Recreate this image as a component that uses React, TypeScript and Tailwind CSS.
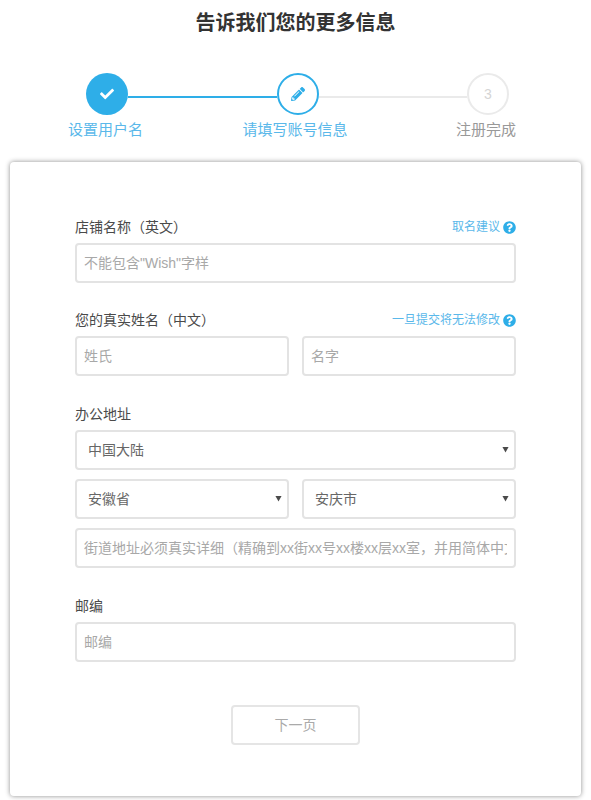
import React from 'react';
import { FaCheck, FaPencilAlt, FaQuestionCircle } from 'react-icons/fa';

const inputClass =
  'w-full h-10 rounded border-2 border-[#e3e3e3] bg-white px-[7px] text-sm text-[#666] outline-none placeholder:text-[#a8a8a8]';

const Hint = ({ text }: { text: string }) => (
  <span className="flex items-center gap-[3px] text-xs text-[#5ab8ea]">
    {text}
    <FaQuestionCircle className="w-[13px] h-[13px] text-[#2eaee8]" />
  </span>
);

const FieldLabel = ({ label, hint }: { label: string; hint?: string }) => (
  <div className="flex items-center justify-between h-5 mb-1.5 text-sm text-[#4a4a4a]">
    <span>{label}</span>
    {hint && <Hint text={hint} />}
  </div>
);

const Select = ({ value }: { value: string }) => (
  <div className="relative w-full">
    <select
      defaultValue={value}
      className="w-full h-10 appearance-none rounded border-2 border-[#e3e3e3] bg-white pl-[11px] pr-6 text-sm text-[#666] outline-none"
    >
      <option>{value}</option>
    </select>
    <svg viewBox="0 0 8 8" className="absolute right-[7px] top-[16px] w-[7px] h-[7px] pointer-events-none">
      <path d="M0.5 1h7L4 7.5z" fill="#4a4a4a" />
    </svg>
  </div>
);

const Line = ({ active }: { active?: boolean }) => (
  <div className={active ? 'flex-1 h-0.5 mt-[5px] bg-[#2eaee8]' : 'flex-1 h-0.5 mt-[5px] bg-[#eaeaea]'}></div>
);

export default function App() {
  return (
    <div
      className="h-[800px] overflow-hidden bg-white pt-3"
      style={{ fontFamily: '"Liberation Sans", "Noto Sans CJK SC", sans-serif' }}
    >
      <h1 className="h-[23px] text-center text-[20px] leading-[23px] font-bold text-[#333]">告诉我们您的更多信息</h1>

      <div className="mt-[38px] pl-[86px] pr-[82px] flex items-center">
        <div className="w-[42px] h-[42px] rounded-full bg-[#2eaee8] flex items-center justify-center text-white">
          <FaCheck className="w-[14px] h-[14px]" />
        </div>
        <Line active />
        <div className="w-[42px] h-[42px] rounded-full border-2 border-[#2eaee8] flex items-center justify-center text-[#2eaee8]">
          <FaPencilAlt className="w-[14px] h-[14px]" />
        </div>
        <Line />
        <div className="w-[42px] h-[42px] rounded-full border-2 border-[#eaeaea] flex items-center justify-center text-sm text-[#d5d5d5]">
          3
        </div>
      </div>

      <div className="mt-[4px] pl-[68px] pr-[75px] flex justify-between text-[15px] leading-[22px] text-[#5ab8ea]">
        <span>设置用户名</span>
        <span className="ml-[-9px]">请填写账号信息</span>
        <span className="text-[#999]">注册完成</span>
      </div>

      <div className="mx-2.5 mt-[21px] w-[571px] h-[634px] rounded bg-white shadow-[0_0_5px_rgba(0,0,0,0.45)] px-[65px] pt-[55px]">
        <FieldLabel label="店铺名称（英文）" hint="取名建议" />
        <input className={inputClass} placeholder={'不能包含"Wish"字样'} />

        <div className="mt-[27px]">
          <FieldLabel label="您的真实姓名（中文）" hint="一旦提交将无法修改" />
          <div className="grid grid-cols-2 gap-[13px]">
            <input className={inputClass} placeholder="姓氏" />
            <input className={inputClass} placeholder="名字" />
          </div>
        </div>

        <div className="mt-[28px]">
          <FieldLabel label="办公地址" />
          <Select value="中国大陆" />
          <div className="grid grid-cols-2 gap-[13px] mt-[9px]">
            <Select value="安徽省" />
            <Select value="安庆市" />
          </div>
          <input
            className={inputClass + ' mt-[9px]'}
            placeholder="街道地址必须真实详细（精确到xx街xx号xx楼xx层xx室，并用简体中文填写）"
          />
        </div>

        <div className="mt-[28px]">
          <FieldLabel label="邮编" />
          <input className={inputClass} placeholder="邮编" />
        </div>

        <div className="mt-[43px] flex justify-center">
          <button className="w-[129px] h-10 rounded border-2 border-[#e5e5e5] bg-white text-sm text-[#aaa]">下一页</button>
        </div>
      </div>
    </div>
  );
}
